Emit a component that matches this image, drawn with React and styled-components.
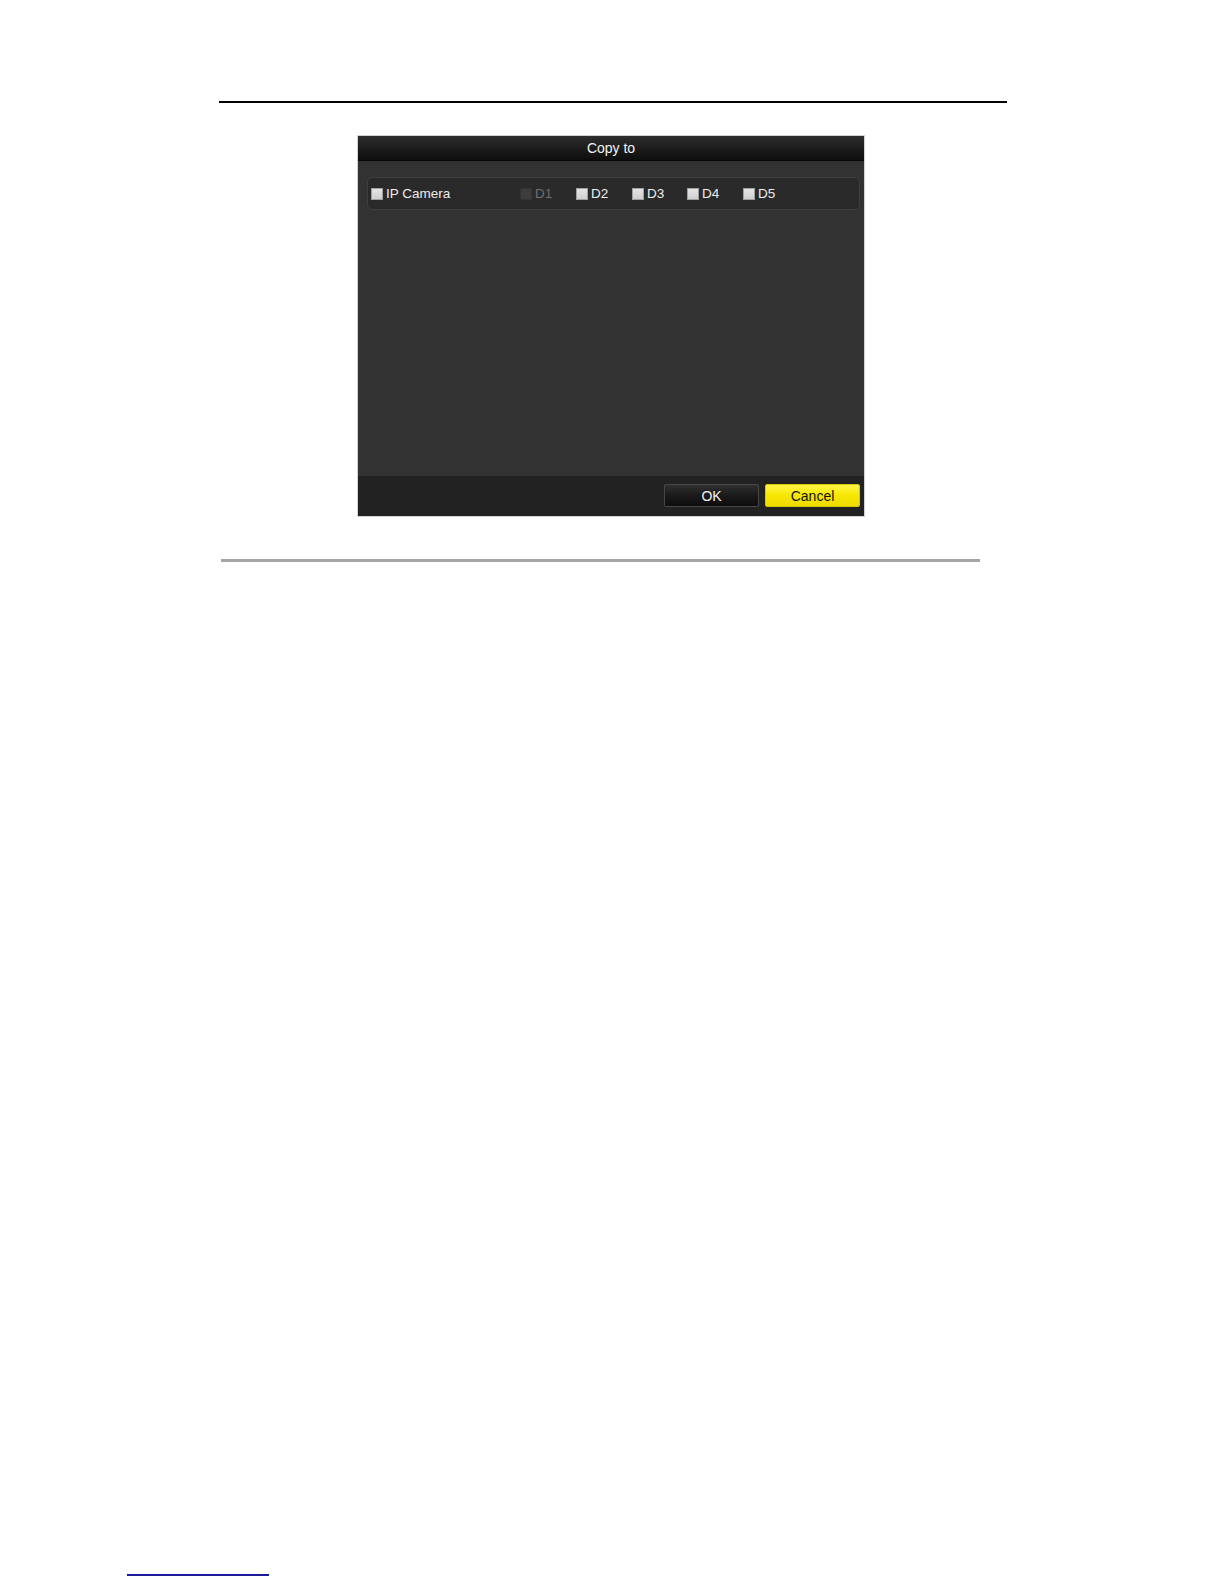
import React from "react";
import styled, { createGlobalStyle } from "styled-components";

const Global = createGlobalStyle`
  html, body { margin: 0; padding: 0; background: #fff; }
  body { font-family: "Liberation Sans", Arial, sans-serif; }
`;

const Page = styled.div`
  width: 1224px;
  height: 1584px;
  display: flex;
  flex-direction: column;
  align-items: flex-start;
  background: #fff;
  overflow: hidden;
`;

const Rule = styled.div`
  flex: none;
  margin-top: ${(p) => p.$top}px;
  margin-left: ${(p) => p.$left}px;
  width: ${(p) => p.$width}px;
  height: ${(p) => p.$h}px;
  background: ${(p) => p.$color};
`;

const Dialog = styled.div`
  flex: none;
  margin-top: 32px;
  margin-left: 357px;
  width: 508px;
  height: 382px;
  display: flex;
  flex-direction: column;
  background: #323232;
  border: 1px solid #d2d2d2;
  box-sizing: border-box;
`;

const TitleBar = styled.div`
  height: 24px;
  flex: none;
  display: flex;
  align-items: center;
  justify-content: center;
  background: linear-gradient(#2e2e2e 0%, #1d1d1d 50%, #0e0e0e 100%);
  border-bottom: 1px solid #060606;
  color: #f4f4f4;
  font-size: 14px;
`;

const Body = styled.div`
  flex: 1;
  padding: 16px 4px 0 9px;
  background: #323232;
`;

const RowPanel = styled.div`
  height: 33px;
  box-sizing: border-box;
  display: flex;
  align-items: center;
  padding-left: 3px;
  border: 1px solid #3e3e3e;
  border-radius: 5px;
  background: #2a2a2a;
`;

const Item = styled.label`
  display: flex;
  align-items: center;
  width: ${(p) => p.$w}px;
  flex: none;
  color: ${(p) => (p.$disabled ? "#6e6e6e" : "#ededed")};
  font-size: 13.5px;
`;

const Box = styled.span`
  width: 12px;
  height: 12px;
  margin-right: 3px;
  flex: none;
  box-sizing: border-box;
  border: 1px solid ${(p) => (p.$disabled ? "#333" : "#a0a0a0")};
  background: ${(p) =>
    p.$disabled ? "#3c3c3c" : "linear-gradient(#e4e4e4, #cfcfcf)"};
`;

const Footer = styled.div`
  height: 40px;
  flex: none;
  display: flex;
  align-items: center;
  justify-content: flex-end;
  gap: 6px;
  padding: 0 4px 1px 0;
  box-sizing: border-box;
  background: #222;
`;

const Button = styled.button`
  width: 95px;
  height: 23px;
  box-sizing: border-box;
  border-radius: 2px;
  font-family: "Liberation Sans", Arial, sans-serif;
  font-size: 14px;
  cursor: pointer;
  padding: 0;
  border: 1px solid ${(p) => (p.$primary ? "#d9c800" : "#474747")};
  color: ${(p) => (p.$primary ? "#111" : "#f2f2f2")};
  background: ${(p) =>
    p.$primary
      ? "linear-gradient(#fff64a, #f6e600 50%, #eedb00)"
      : "linear-gradient(#303030, #1a1a1a 50%, #0d0d0d)"};
`;

const items = [
  { label: "IP Camera", w: 149 },
  { label: "D1", w: 56, disabled: true },
  { label: "D2", w: 56 },
  { label: "D3", w: 55 },
  { label: "D4", w: 56 },
  { label: "D5", w: 56 },
];

export default function App() {
  return (
    <Page>
      <Global />
      <Rule $top={101} $left={219} $width={788} $h={2} $color="#000" />
      <Dialog>
        <TitleBar>Copy to</TitleBar>
        <Body>
          <RowPanel>
            {items.map((it) => (
              <Item key={it.label} $w={it.w} $disabled={it.disabled}>
                <Box $disabled={it.disabled} />
                {it.label}
              </Item>
            ))}
          </RowPanel>
        </Body>
        <Footer>
          <Button>OK</Button>
          <Button $primary>Cancel</Button>
        </Footer>
      </Dialog>
      <Rule $top={42} $left={221} $width={759} $h={3} $color="#a6a6a6" />
      <Rule $top={1012} $left={127} $width={142} $h={2} $color="#1a1a9a" />
    </Page>
  );
}
